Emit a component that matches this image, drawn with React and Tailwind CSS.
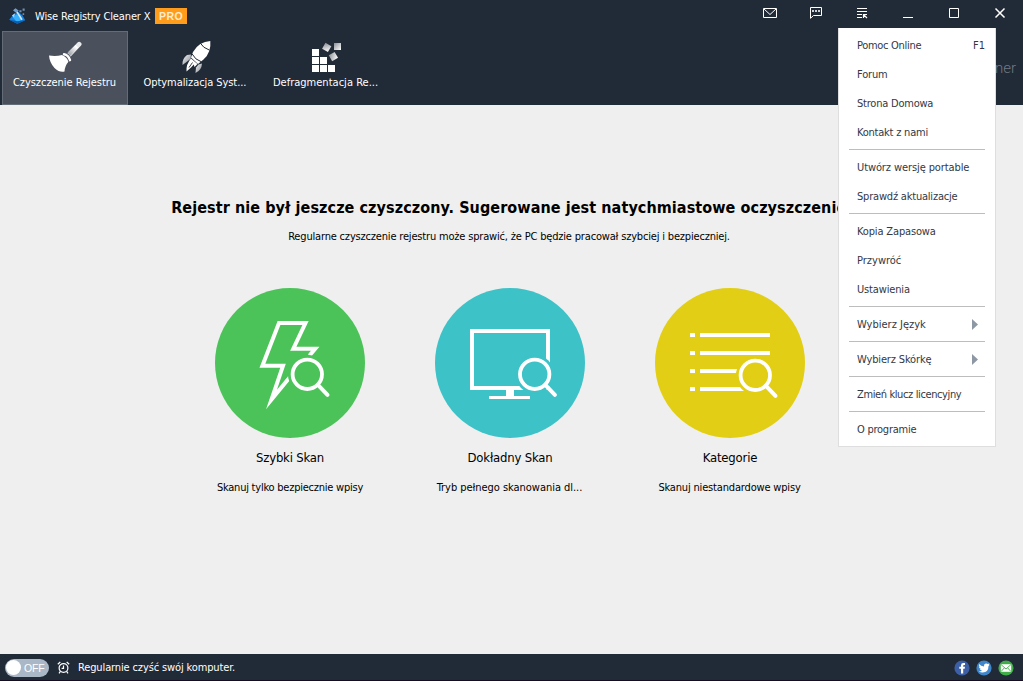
import { useState } from 'react';

const MENU_GROUPS = [
  [
    { label: 'Pomoc Online', shortcut: 'F1', spacing: 'tracking-[-0.3px]' },
    { label: 'Forum', spacing: 'tracking-[-0.15px]' },
    { label: 'Strona Domowa', spacing: 'tracking-[-0.22px]' },
    { label: 'Kontakt z nami', spacing: 'tracking-[-0.22px]' },
  ],
  [
    { label: 'Utwórz wersję portable', spacing: 'tracking-[-0.1px]' },
    { label: 'Sprawdź aktualizacje', spacing: 'tracking-[-0.2px]' },
  ],
  [
    { label: 'Kopia Zapasowa', spacing: 'tracking-[-0.15px]' },
    { label: 'Przywróć', spacing: 'tracking-[0px]' },
    { label: 'Ustawienia', spacing: 'tracking-[-0.15px]' },
  ],
  [{ label: 'Wybierz Język', submenu: true, spacing: 'tracking-[0px]' }],
  [{ label: 'Wybierz Skórkę', submenu: true, spacing: 'tracking-[-0.15px]' }],
  [{ label: 'Zmień klucz licencyjny', spacing: 'tracking-[-0.38px]' }],
  [{ label: 'O programie', spacing: 'tracking-[-0.25px]' }],
];

function AppLogo() {
  return (
    <svg className="w-[17px] h-4 shrink-0" viewBox="0.5 1 15.5 15">
      <path d="M.5 12 4.5 7 9 4.5 13 8 15.5 12.5 8 15.8Z" fill="#1583df" />
      <path d="M4 10 7 7 11 8 12 12 8 14.5Z" fill="#35b0fb" />
      <path d="M.5 12 8 13.5 15.5 12.5 8 15.8Z" fill="#0b5cb0" />
      <path d="M6 2 12.5 12" stroke="#d7e6f4" strokeWidth="1.5" />
      <path d="M4 3 6.5 1.2 9.5 3.5 6.5 5.2Z" fill="#6c9fc9" />
      <path d="M3 8 6 6 5 10Z" fill="#a7ddff" />
      <path d="M10 3h2v2h-2zM13 1.5h2v2h-2zM13 6h1.5v1.5H13z" fill="#6f8fae" />
    </svg>
  );
}

function BroomIcon() {
  return (
    <svg className="w-[34px] h-8" viewBox="0 0 34 32">
      <defs>
        <linearGradient id="handle" x1="1" y1="0" x2="0" y2="1">
          <stop offset="0.2" stopColor="#fff" />
          <stop offset="1" stopColor="#8b9098" />
        </linearGradient>
      </defs>
      <path d="M31.2 3.2 21 14" stroke="#e9eaec" strokeWidth="4.6" strokeLinecap="round" fill="none" />
      <path d="M27.5 4 19.5 11.5 22.5 14.8 30.5 6.5Z" fill="url(#handle)" />
      <path d="M16 13.2Q20.5 14 22 19.2" stroke="#4a505c" strokeWidth="4" strokeLinecap="round" fill="none" />
      <path d="M16 13.2Q20.5 14 22 19.2" stroke="#fff" strokeWidth="2.4" strokeLinecap="round" fill="none" />
      <path d="M1 14.5Q8 15.5 14 14Q19 16 20.4 20.8Q16.8 25 16.5 30.5Q12 32 6.5 27Q1.5 21.5 1 14.5Z" fill="#fff" />
    </svg>
  );
}

function RocketIcon() {
  return (
    <svg className="w-[32px] h-[34px] ml-[4px] -mt-px" viewBox="0 0 32 34">
      <defs>
        <linearGradient id="fin" x1="0" y1="0" x2="1" y2="1">
          <stop offset="0" stopColor="#f2f2f3" />
          <stop offset="1" stopColor="#858b94" />
        </linearGradient>
      </defs>
      <path d="M1.5 25Q1 18.5 6 15L10 14.5 9.5 19Z" fill="url(#fin)" />
      <path d="M14.5 33Q20.5 30.5 21 23.5L17.5 24.5 15 27.5Z" fill="url(#fin)" />
      <path d="M29.3 1Q30.5 12.5 22.5 19.5L17 24 10 17.5 12 12Q18 1.5 29.3 1Z" fill="#fff" />
      <path d="M19 2.8Q22 8 28.6 10.2M11 13.8Q14 19.8 20.4 21.8" stroke="#212a37" strokeWidth="1" fill="none" />
      <path d="M10 18.5 16.5 24 13.5 27 12.8 24.5 10 27.5 5.5 31.5Q5 24 10 18.5Z" fill="#fff" />
      <path d="M8 27.5 11.5 22.5" stroke="#212a37" strokeWidth="0.9" />
    </svg>
  );
}

function BlocksIcon() {
  return (
    <svg className="w-8 h-8 ml-[4px]" viewBox="0 0 32 32">
      <defs>
        <linearGradient id="block" x1="0" y1="0" x2="1" y2="1">
          <stop offset="0" stopColor="#8b9098" />
          <stop offset="1" stopColor="#fff" />
        </linearGradient>
      </defs>
      <path d="M1 8h7v7H1zM1 16h7v7H1zM9 16h7v7H9zM1 24h7v7H1zM9 24h7v7H9zM17 24h7v7H17z" fill="#fff" />
      <rect x="12.3" y="3" width="6.8" height="6.8" fill="url(#block)" transform="rotate(30 15.7 6.4)" />
      <rect x="23" y="2" width="7" height="7" fill="url(#block)" />
      <rect x="19" y="12.2" width="6.8" height="6.8" fill="url(#block)" transform="rotate(-30 22.3 15.6)" />
    </svg>
  );
}

function Lens({ cx, cy, bg }) {
  return (
    <g transform={`translate(${cx} ${cy})`} fill="none" stroke="#fff">
      <circle r="19.4" fill={bg} stroke="none" />
      <circle r="14.7" strokeWidth="3.8" />
      <path d="M10.6 10.6 20.2 20.6" strokeWidth="4" strokeLinecap="round" />
    </g>
  );
}

function QuickScanIcon() {
  return (
    <svg className="w-[150px] h-[150px]" viewBox="0 0 150 150">
      <path
        d="M94.5 67.5 100.2 60.7H78.3L90.5 35H64L47.4 77.8H68L56.5 111.5 75 89"
        fill="none"
        stroke="#fff"
        strokeWidth="4"
        strokeMiterlimit="10"
      />
      <Lens cx={92.3} cy={86.3} bg="#4bc359" />
    </svg>
  );
}

function DeepScanIcon() {
  return (
    <svg className="w-[150px] h-[150px]" viewBox="0 0 150 150">
      <rect x="37" y="43" width="76" height="57" fill="none" stroke="#fff" strokeWidth="4" />
      <Lens cx={99.7} cy={86.3} bg="#3cc2c7" />
      <path d="M71 101h8v7h16v3H54v-3h17z" fill="#fff" />
    </svg>
  );
}

function CategoriesIcon() {
  return (
    <svg className="w-[150px] h-[150px]" viewBox="0 0 150 150">
      <path
        d="M35 47h5M45 47h70M35 65h5M45 65h70M35 83h5M45 83h40M35 101h5M45 101h50"
        stroke="#fff"
        strokeWidth="4"
      />
      <Lens cx={100.3} cy={87.3} bg="#e2ce14" />
    </svg>
  );
}

const WINDOW_BUTTONS = [
  {
    name: 'mail',
    icon: (
      <>
        <path d="M1.5 4.5h13v9h-13z" />
        <path d="M2 5 8 10.5 14 5" />
      </>
    ),
  },
  {
    name: 'feedback',
    icon: (
      <>
        <path d="M2.5 3.5h11v8h-8l-3 2.8z" />
        <path d="M4 7h2M7 7h2M10 7h2" strokeWidth="2" strokeOpacity="0.8" />
      </>
    ),
  },
  {
    name: 'menu',
    icon: (
      <>
        <path d="M3 4.5h10M3 7.5h10M3 10.5h5M3 13.5h5" />
        <path d="M9.5 14V10.5H13M10 11 13 14" strokeWidth="1.2" />
      </>
    ),
  },
  { name: 'minimize', icon: <path d="M3 13.5h10" /> },
  { name: 'maximize', icon: <path d="M3.5 4.5h9v9h-9z" /> },
  { name: 'close', icon: <path d="M3.5 4.5 12.5 13.5M12.5 4.5 3.5 13.5" strokeWidth="1.5" /> },
];

const TABS = [
  { id: 'clean', label: 'Czyszczenie Rejestru', Icon: BroomIcon, spacing: 'tracking-[-0.04px] pr-px' },
  { id: 'optimize', label: 'Optymalizacja Syst...', Icon: RocketIcon, spacing: 'tracking-[-0.07px]' },
  { id: 'defrag', label: 'Defragmentacja Re...', Icon: BlocksIcon, spacing: 'tracking-[0.02px] pl-px' },
];

const SCANS = [
  {
    title: 'Szybki Skan',
    text: 'Skanuj tylko bezpiecznie wpisy',
    Icon: QuickScanIcon,
    color: 'bg-[#4bc359]',
    spacing: 'tracking-[-0.23px]',
  },
  {
    title: 'Dokładny Skan',
    text: 'Tryb pełnego skanowania dl...',
    Icon: DeepScanIcon,
    color: 'bg-[#3cc2c7]',
    spacing: 'tracking-[-0.04px] pr-px',
  },
  {
    title: 'Kategorie',
    text: 'Skanuj niestandardowe wpisy',
    Icon: CategoriesIcon,
    color: 'bg-[#e2ce14]',
    spacing: 'tracking-[-0.17px] pr-px',
  },
];

function DropdownMenu() {
  return (
    <div className="absolute z-10 top-7 left-[838px] w-[158px] h-[419px] bg-white border border-t-0 border-[#dedede] pt-[2px] text-[#333843]">
      {MENU_GROUPS.map((group, i) => (
        <div key={i}>
          {i > 0 && <div className="h-px bg-[#bdbdbd] mx-[10px] mt-[3px] mb-[2px]" />}
          {group.map((item) => (
            <div key={item.label} className="h-[29px] flex items-center justify-between pl-[18px] pr-[10px]">
              <span className={`pt-[2px] ${item.spacing}`}>{item.label}</span>
              {item.shortcut && <span className="pt-[2px]">{item.shortcut}</span>}
              {item.submenu && (
                <svg className="w-[6px] h-[11px] mr-[7px] mt-px" viewBox="0 0 6 11">
                  <path d="M0 0 6 5.5 0 11Z" fill="#8e98a5" />
                </svg>
              )}
            </div>
          ))}
        </div>
      ))}
    </div>
  );
}

export default function App() {
  const [activeTab, setActiveTab] = useState('clean');
  const [menuOpen, setMenuOpen] = useState(true);

  return (
    <div className="relative w-[1023px] h-[681px] overflow-hidden flex flex-col bg-[#efefef] text-[11px] leading-4 whitespace-nowrap font-['DejaVu_Sans_Condensed','DejaVu_Sans',sans-serif] font-stretch-condensed">
      {/* Header */}
      <header className="h-[105px] shrink-0 bg-[#212a37] text-white">
        <div className="h-[31px] flex justify-between">
          <div className="flex items-center pl-[9px]">
            <AppLogo />
            <span className="ml-[9px] w-[120px] pt-[2px] tracking-[-0.13px]">Wise Registry Cleaner X</span>
            <span className="w-8 h-4 mt-px bg-[#ff9c1b] text-center text-[10.5px] font-['Liberation_Sans',sans-serif] font-bold tracking-[0.4px] text-[#ffeccc]">PRO</span>
          </div>
          <div className="flex">
            {WINDOW_BUTTONS.map((btn) => (
              <button
                key={btn.name}
                aria-label={btn.name}
                onClick={() => btn.name === 'menu' && setMenuOpen(!menuOpen)}
                className="w-[46px] flex justify-center pt-1"
              >
                <svg className="w-4 h-[18px]" viewBox="0 0 16 18" fill="none" stroke="#fff">
                  {btn.icon}
                </svg>
              </button>
            ))}
          </div>
        </div>
        <div className="flex justify-between pl-[2px]">
          <div className="flex gap-1">
            {TABS.map(({ id, label, Icon, spacing }) => (
              <button
                key={id}
                onClick={() => setActiveTab(id)}
                className={`w-[126px] h-[74px] border flex flex-col items-center pt-[9px] ${
                  activeTab === id ? 'bg-[#4a505c] border-[#646c78]' : 'border-transparent'
                }`}
              >
                <span className="h-8 mb-[2px]">
                  <Icon />
                </span>
                <span className={spacing}>{label}</span>
              </button>
            ))}
          </div>
          <div className="mt-[27px] mr-[7px] text-[15px] leading-5 font-['Roboto',sans-serif] font-stretch-normal font-light text-[#727984]">
            ner
          </div>
        </div>
      </header>

      {/* Content */}
      <main className="flex-1 flex flex-col items-center text-black">
        <h1 className="mt-[91px] text-[16px] leading-6 font-bold tracking-[0.08px]">
          Rejestr nie był jeszcze czyszczony. Sugerowane jest natychmiastowe oczyszczenie.
        </h1>
        <p className="mt-[9px] pr-[5px] tracking-[-0.177px]">
          Regularne czyszczenie rejestru może sprawić, że PC będzie pracował szybciej i bezpieczniej.
        </p>
        <div className="mt-[43px] flex gap-[70px] pr-[3px]">
          {SCANS.map(({ title, text, Icon, color, spacing }) => (
            <div key={title} className="w-[150px] flex flex-col items-center">
              <button className={`w-[150px] h-[150px] rounded-full ${color}`}>
                <Icon />
              </button>
              <span className="mt-3 text-[13px] tracking-[-0.2px]">{title}</span>
              <span className={`mt-[14px] ${spacing}`}>{text}</span>
            </div>
          ))}
        </div>
      </main>

      {/* Status bar */}
      <footer className="h-[27px] shrink-0 flex items-center bg-[#212a37] border-b border-[#160d22] pl-[5px] pr-[9px] text-white">
        <div className="w-11 h-[18px] mt-px rounded-full bg-[#a9b7c6] flex items-center pl-px">
          <span className="w-[15px] h-[15px] rounded-full bg-white" />
          <span className="ml-[3px] text-[10.5px] tracking-[-0.2px] font-['Liberation_Sans',sans-serif]">OFF</span>
        </div>
        <svg className="ml-2 mt-px w-[13px] h-[13px]" viewBox="0 0 13 13" fill="none" stroke="#fff" strokeWidth="1.2">
          <circle cx="6.5" cy="7" r="4.4" />
          <path d="M6.5 4.5V7.3H4.6M.8 3.2 3.3 1M12.2 3.2 9.7 1M3.4 10.4 2 12.3M9.6 10.4 11 12.3" />
        </svg>
        <span className="ml-2 pt-[2px] flex-1 tracking-[-0.13px]">Regularnie czyść swój komputer.</span>
        <div className="flex gap-[6px] mt-px">
          <svg className="w-4 h-4" viewBox="0 0 16 16">
            <circle cx="8" cy="8" r="7.6" fill="#3d5fa6" />
            <path d="M7 13.5V8.8H5.3V6.7H7V5.3Q7 2.9 9.4 2.9H11V5H9.9Q9.2 5 9.2 5.8V6.7H11L10.7 8.8H9.2V13.5Z" fill="#fff" />
          </svg>
          <svg className="w-4 h-4" viewBox="0 0 16 16">
            <circle cx="8" cy="8" r="7.6" fill="#3f86cc" />
            <path d="M3 4Q5 6.2 8 6.4Q7.8 3.5 10.2 3.4Q11.2 3.4 11.8 4.1L13.4 3.5 12.7 4.8 13.7 4.7 12.5 6Q12.5 12.4 6.6 12.6Q4.5 12.6 2.8 11.5 5 11.5 6 10.5 4.3 10.3 3.8 8.9L4.8 8.8Q3 8.2 2.9 6.5L3.8 6.7Q2.4 5.5 3 4Z" fill="#fff" />
          </svg>
          <svg className="w-4 h-4" viewBox="0 0 16 16">
            <circle cx="8" cy="8" r="7.6" fill="#3fae49" />
            <path d="M2.8 4.2h10.4v7.6H2.8z" fill="#fff" />
            <path d="M3 4.5 8 9 13 4.5M3 11.6 6.4 7.8M13 11.6 9.6 7.8" stroke="#3fae49" strokeWidth=".9" fill="none" />
          </svg>
        </div>
      </footer>

      {menuOpen && <DropdownMenu />}
    </div>
  );
}
